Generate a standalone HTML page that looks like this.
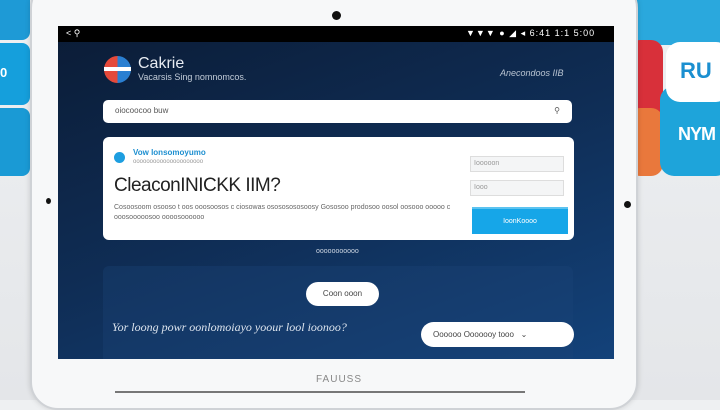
<!DOCTYPE html>
<html><head><meta charset="utf-8"><style>
*{margin:0;padding:0;box-sizing:border-box}
body{width:720px;height:400px;overflow:hidden;background:linear-gradient(#eef0f2,#e4e6e9);position:relative;font-family:"Liberation Sans",sans-serif}
.a{position:absolute}
</style></head><body>
<!-- background tiles -->
<div class="a" style="left:-10px;top:-10px;width:40px;height:50px;background:#1e9ad6;border-radius:8px"></div>
<div class="a" style="left:-10px;top:43px;width:40px;height:62px;background:#159fdc;border-radius:8px;color:#fff;font-weight:bold;font-size:13px;padding:22px 0 0 10px">0</div>
<div class="a" style="left:-10px;top:108px;width:40px;height:68px;background:#1a9ad5;border-radius:8px"></div>
<div class="a" style="left:628px;top:-10px;width:100px;height:55px;background:#2aa8dd;border-radius:12px"></div>
<div class="a" style="left:628px;top:40px;width:35px;height:100px;background:#d8303a;border-radius:12px"></div>
<div class="a" style="left:628px;top:108px;width:35px;height:68px;background:#e9783c;border-radius:12px"></div>
<div class="a" style="left:660px;top:86px;width:70px;height:90px;background:#1ea4da;border-radius:14px;color:#fff;font-weight:bold;font-size:18px;padding:38px 0 0 18px;letter-spacing:-1px">NYM</div>
<div class="a" style="left:666px;top:42px;width:64px;height:60px;background:#fff;border-radius:14px;color:#1b8fd0;font-weight:bold;font-size:22px;padding:16px 0 0 14px">RU</div>
<!-- tablet -->
<div class="a" style="left:30px;top:-20px;width:608px;height:430px;background:#f7f8f9;border:2px solid #cfd2d6;border-radius:28px;box-shadow:0 0 6px rgba(0,0,0,.15)"></div>
<div class="a" style="left:332px;top:11px;width:9px;height:9px;border-radius:50%;background:#111"></div>
<div class="a" style="left:46px;top:198px;width:5px;height:6px;border-radius:50%;background:#111"></div>
<div class="a" style="left:624px;top:201px;width:7px;height:7px;border-radius:50%;background:#111"></div>
<div class="a" style="left:316px;top:374px;font-size:10px;color:#888;letter-spacing:1px">FAUUSS</div>
<div class="a" style="left:115px;top:391px;width:410px;height:2px;background:#777"></div>
<!-- screen -->
<div class="a" style="left:58px;top:26px;width:556px;height:333px;background:linear-gradient(160deg,#0b1c36,#0f2d55 50%,#13427a);overflow:hidden">
 <div class="a" style="left:0;top:0;width:556px;height:16px;background:#000;color:#fff;font-size:9px">
  <span class="a" style="left:8px;top:2px">&lt; ⚲</span>
  <span class="a" style="left:408px;top:2px;letter-spacing:1px">▼▼▼ ● ◢ ◂ 6:41 1:1 5:00</span>
 </div>
 <div class="a" style="left:46px;top:30px;width:27px;height:27px;border-radius:50%;background:linear-gradient(90deg,#e5493a 50%,#2a7fd1 50%)"></div>
 <div class="a" style="left:46px;top:41px;width:27px;height:4px;background:#fff"></div>
 <div class="a" style="left:80px;top:29px;color:#e8ecf2;font-size:16px">Cakrie</div>
 <div class="a" style="left:80px;top:46px;color:#c2ccd8;font-size:9px">Vacarsis Sing nomnomcos.</div>
 <div class="a" style="left:442px;top:42px;color:#b9c4d2;font-size:9px;font-style:italic">Anecondoos IIB</div>
 <div class="a" style="left:45px;top:74px;width:469px;height:23px;background:#fff;border-radius:5px;font-size:8px;color:#555;padding:6px 12px">oiocoocoo buw<span style="position:absolute;right:12px;top:6px">⚲</span></div>
 <div class="a" style="left:45px;top:111px;width:471px;height:103px;background:#fff;border-radius:6px">
  <div class="a" style="left:11px;top:15px;width:11px;height:11px;border-radius:50%;background:#1d9ee0"></div>
  <div class="a" style="left:30px;top:11px;font-size:8px;color:#1d8fd0;font-weight:bold">Vow lonsomoyumo</div>
  <div class="a" style="left:30px;top:22px;font-size:6px;color:#999">ooooooooooooooooooooo</div>
  <div class="a" style="left:11px;top:38px;font-size:19px;color:#222;letter-spacing:-0.5px">CleaconINICKK IIM?</div>
  <div class="a" style="left:11px;top:66px;font-size:7px;color:#666;width:340px;line-height:10px">Cosoosoom osooso t oos ooosoosos c ciosowas osososososoosy Gososoo prodosoo oosol oosooo ooooo c ooosooooosoo oooosoooooo</div>
  <div class="a" style="left:367px;top:19px;width:94px;height:16px;border:1px solid #ddd;background:#f4f5f6;font-size:7px;color:#999;padding:3px 3px">Iooooon</div>
  <div class="a" style="left:367px;top:43px;width:94px;height:16px;border:1px solid #ddd;background:#f4f5f6;font-size:7px;color:#999;padding:3px 3px">Iooo</div>
  <div class="a" style="left:369px;top:70px;width:96px;height:27px;background:#16a6e8;border-top:2px solid #5cc3f0;color:#fff;font-size:7px;text-align:center;padding-top:9px">IoonKoooo</div>
 </div>
 <div class="a" style="left:258px;top:222px;font-size:7px;color:#cdd6e2">ooooooooooo</div>
 <div class="a" style="left:45px;top:240px;width:470px;height:100px;background:rgba(30,70,120,.35);border-radius:6px"></div>
 <div class="a" style="left:248px;top:256px;width:73px;height:24px;background:#fff;border-radius:12px;font-size:8px;color:#444;text-align:center;padding-top:7px">Coon ooon</div>
 <div class="a" style="left:54px;top:294px;font-size:12px;font-style:italic;color:#dce4ee;font-family:'Liberation Serif',serif">Yor loong powr oonlomoiayo yoour lool ioonoo?</div>
 <div class="a" style="left:363px;top:296px;width:153px;height:25px;background:#fff;border-radius:13px;font-size:8px;color:#444;padding:8px 0 0 12px">Oooooo Ooooooy tooo &nbsp; ⌄</div>
</div>
</body></html>
